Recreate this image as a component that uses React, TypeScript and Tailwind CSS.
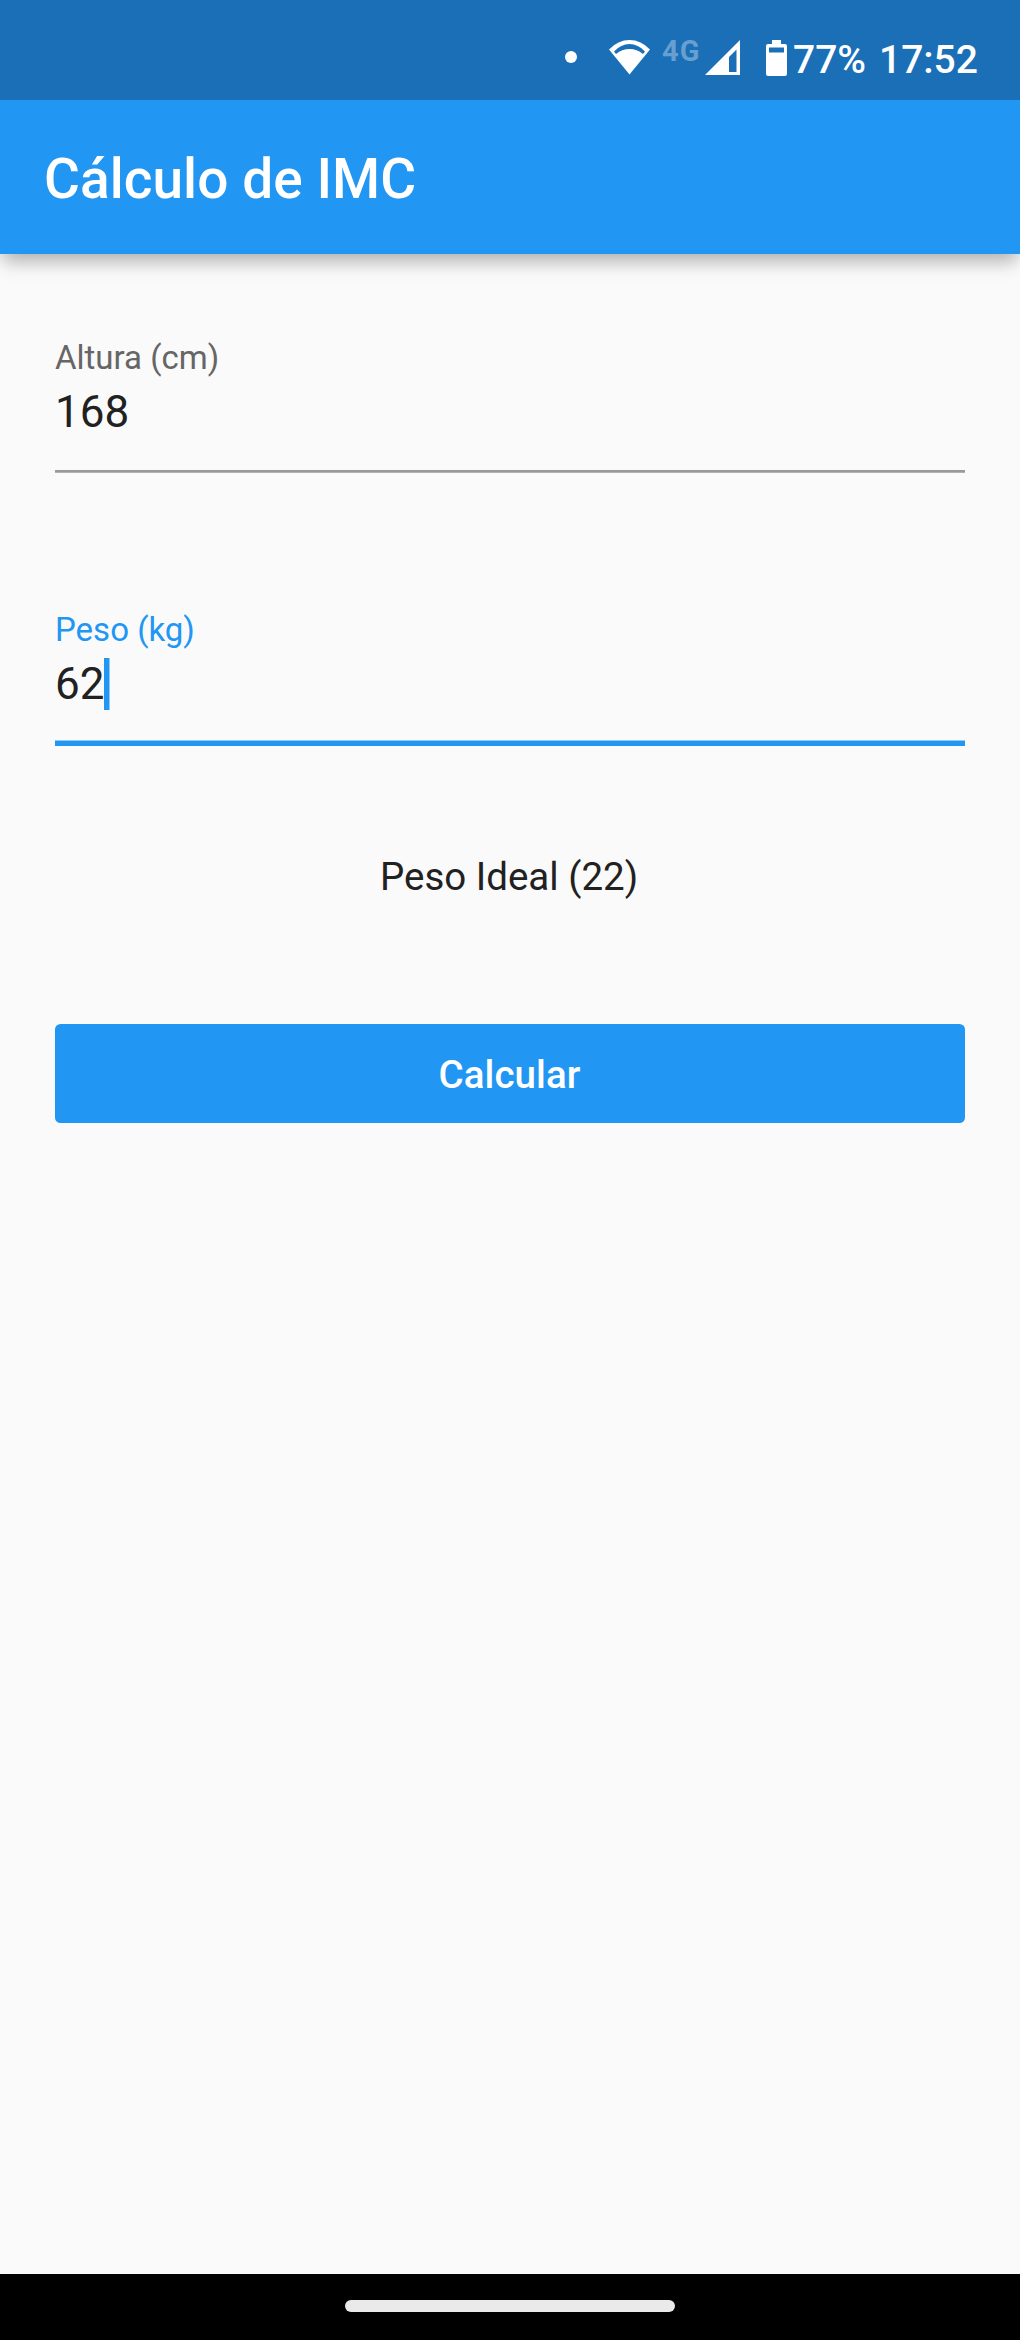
function StatusBar() {
  return (
    <div className="flex h-[100px] items-start bg-[#1a6fb7] pl-[565px] text-white">
      <span className="mt-[51px] size-3 shrink-0 rounded-full bg-white" />
      <svg className="mt-10 ml-8 h-[35px] w-[41px] shrink-0" viewBox="0 0 41 35">
        <path d="M20.5 34.5 0 9.5Q9 0 20.5 0T41 9.5Z" fill="#fff" />
        <path d="M5 11.500Q12 4 20.500 4T36 11.500L34 14Q28 9 20.500 9T7 14Z" fill="#1a6fb7" />
      </svg>
      <span className="mt-[35px] ml-[12px] w-[43px] shrink-0 text-[29px] leading-[33px] font-bold tracking-[1px] text-[#669fd0]">4G</span>
      <svg className="mt-10 h-[35px] w-[35px] shrink-0" viewBox="0 0 35 35">
        <path d="M0 35 35 0V35ZM24 17V32H31.500V9.500Z" fill="#fff" fillRule="evenodd" />
      </svg>
      <svg className="mt-10 ml-[26px] h-9 w-[21px] shrink-0" viewBox="0 0 21 36">
        <path d="M6 0h9v4h4a2 2 0 0 1 2 2v28a2 2 0 0 1-2 2H2a2 2 0 0 1-2-2V6a2 2 0 0 1 2-2h4ZM3 7.500v5h15v-5Z" fill="#fff" fillRule="evenodd" />
      </svg>
      <span className="mt-[37px] ml-[6px] w-[86px] shrink-0 text-[39px] leading-[46px] font-medium">77%</span>
      <span className="mt-[37px] shrink-0 text-[39px] leading-[46px] font-medium">17:52</span>
    </div>
  );
}

export default function App() {
  return (
    <div className="flex h-[2340px] w-[1020px] flex-col overflow-hidden bg-[#fafafa] font-['Roboto',sans-serif] text-[#212121]">
      <div className="relative z-10 flex shrink-0 flex-col bg-[#2196f3] shadow-[0_10px_18px_-3px_rgba(0,0,0,0.29),0_4px_20px_rgba(0,0,0,0.04)]">
        <StatusBar />
        <h1 className="flex h-[154px] items-center pt-1 pl-[44px] text-[55px] font-medium tracking-[0.05px] text-white">Cálculo de IMC</h1>
      </div>
      <main className="flex flex-1 flex-col px-[55px] pt-[84px]">
        <div className="flex flex-col">
          <label className="text-[33px] leading-[40px] text-[#666]">Altura (cm)</label>
          <div className="mt-2 text-[44px] leading-[52px]">168</div>
          <div className="mt-8 h-[3px] border-b border-[#b2b2b2] bg-[#999]" />
        </div>
        <div className="mt-[137px] flex flex-col">
          <label className="text-[33px] leading-[40px] text-[#2196f3]">Peso (kg)</label>
          <div className="mt-2 flex text-[44px] leading-[52px]">
            <span className="w-[49px]">62</span>
            <span className="h-[52px] w-[6px] border-r border-[#90caf9] bg-[#2196f3]" />
          </div>
          <div className="mt-[30px] h-[6px] border-t border-[#90caf9] bg-[#2196f3]" />
        </div>
        <p className="mt-[108px] pr-[2px] text-center text-[38.5px] leading-[46px]">Peso Ideal (22)</p>
        <button className="mt-[124px] h-[99px] rounded-[5.5px] bg-[#2196f3] pt-[2px] pr-[1px] text-[38.5px] font-medium tracking-[0.05px] text-white">Calcular</button>
      </main>
      <div className="flex h-[66px] shrink-0 justify-center bg-black pt-[26px]">
        <div className="h-3 w-[330px] rounded-full bg-[#eaeaea]" />
      </div>
    </div>
  );
}
